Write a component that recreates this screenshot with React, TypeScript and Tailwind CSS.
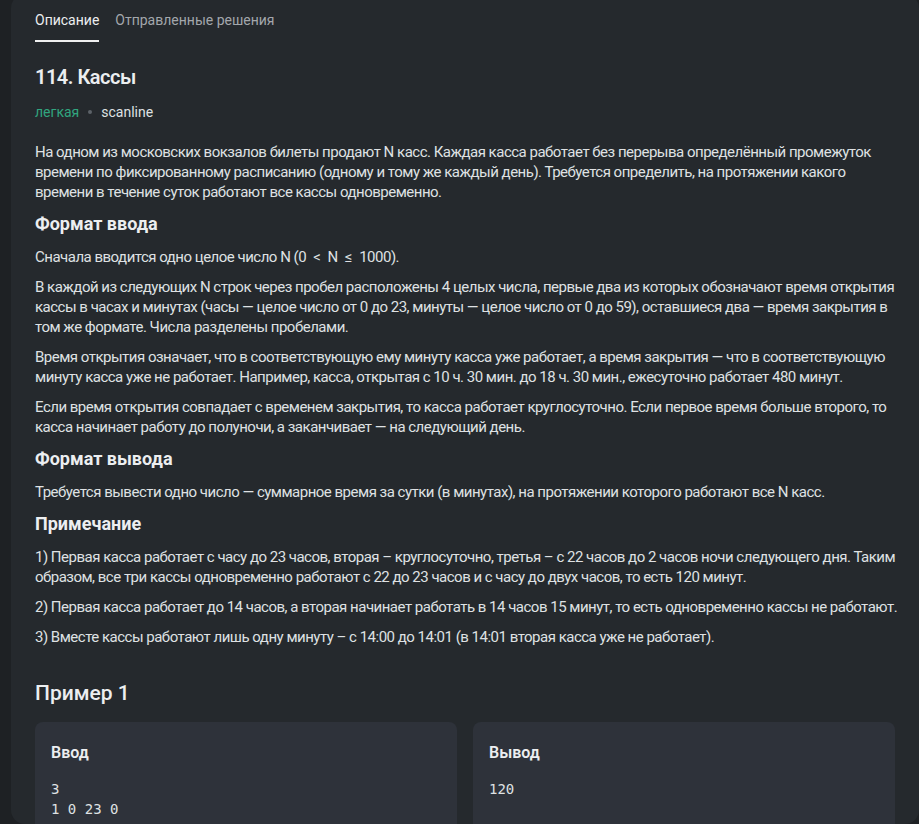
const font = { fontFamily: 'Roboto, "Noto Sans", sans-serif' };

function Para({ children }: { children: React.ReactNode }) {
  return (
    <p className="mb-[10px] whitespace-nowrap text-[15px] leading-5 tracking-[-0.5px] text-[#dfe1e3]">{children}</p>
  );
}

function Heading({ children }: { children: React.ReactNode }) {
  return <h3 className="mb-[11px] text-[18px] font-bold leading-6 text-[#eceef0]">{children}</h3>;
}

function SampleCard({ title, lines }: { title: string; lines: string[] }) {
  return (
    <div className="rounded-lg bg-[#2e323a] px-4 pb-5 pt-5">
      <div className="text-[16px] font-semibold leading-[22px] text-[#eceef0]">{title}</div>
      <pre
        className="mt-[15px] text-[14px] leading-5 text-[#dfe1e3]"
        style={{ fontFamily: '"DejaVu Sans Mono", monospace' }}
      >
        {lines.join("\n")}
      </pre>
    </div>
  );
}

export default function App() {
  return (
    <div className="h-[824px] overflow-hidden bg-[#1e2124]" style={font}>
      <div className="ml-[11px] -mt-[6px] h-[830px] overflow-hidden rounded-[14px] bg-[#25292d] px-6 pt-[6px]">
        <nav className="flex gap-4 pt-[10px] text-[14px] leading-5">
          <div className="border-b-2 border-[#f0f0f0] pb-[10px] text-[#eceef0]">Описание</div>
          <div className="pb-[10px] text-[#a3a7ac]">Отправленные решения</div>
        </nav>

        <h1 className="mt-[21px] text-[20px] font-semibold leading-7 tracking-[-0.5px] text-[#eceef0]">114. Кассы</h1>

        <div className="mt-[11px] flex items-center gap-[9px] text-[14px] leading-5">
          <span className="text-[#31a57f]">легкая</span>
          <span className="h-[4px] w-[4px] rounded-full bg-[#5d6268]" />
          <span className="text-[#dfe1e3]">scanline</span>
        </div>

        <div className="mt-[20px]">
          <Para>
            На одном из московских вокзалов билеты продают N касс. Каждая касса работает без перерыва определённый
            промежуток
            <br />
            времени по фиксированному расписанию (одному и тому же каждый день). Требуется определить, на протяжении
            какого
            <br />
            времени в течение суток работают все кассы одновременно.
          </Para>

          <Heading>Формат ввода</Heading>
          <Para>
            Сначала вводится одно целое число N (0&ensp;&lt;&ensp;N&ensp;≤&ensp;1000).
          </Para>
          <Para>
            В каждой из следующих N строк через пробел расположены 4 целых числа, первые два из которых обозначают
            время открытия
            <br />
            кассы в часах и минутах (часы — целое число от 0 до 23, минуты — целое число от 0 до 59), оставшиеся два —
            время закрытия в
            <br />
            том же формате. Числа разделены пробелами.
          </Para>
          <Para>
            Время открытия означает, что в соответствующую ему минуту касса уже работает, а время закрытия — что в
            соответствующую
            <br />
            минуту касса уже не работает. Например, касса, открытая с 10 ч. 30 мин. до 18 ч. 30 мин., ежесуточно
            работает 480 минут.
          </Para>
          <Para>
            Если время открытия совпадает с временем закрытия, то касса работает круглосуточно. Если первое время
            больше второго, то
            <br />
            касса начинает работу до полуночи, а заканчивает — на следующий день.
          </Para>

          <Heading>Формат вывода</Heading>
          <Para>
            Требуется вывести одно число — суммарное время за сутки (в минутах), на протяжении которого работают все N
            касс.
          </Para>

          <Heading>Примечание</Heading>
          <Para>
            1) Первая касса работает с часу до 23 часов, вторая – круглосуточно, третья – с 22 часов до 2 часов ночи
            следующего дня. Таким
            <br />
            образом, все три кассы одновременно работают с 22 до 23 часов и с часу до двух часов, то есть 120 минут.
          </Para>
          <Para>
            2) Первая касса работает до 14 часов, а вторая начинает работать в 14 часов 15 минут, то есть одновременно
            кассы не работают.
          </Para>
          <Para>3) Вместе кассы работают лишь одну минуту – с 14:00 до 14:01 (в 14:01 вторая касса уже не работает).</Para>
        </div>

        <h2 className="mt-[32px] text-[21px] font-medium leading-7 text-[#eceef0]">Пример 1</h2>

        <div className="mt-[15px] grid grid-cols-2 gap-4">
          <SampleCard title="Ввод" lines={["3", "1 0 23 0", "0 0 0 0", "22 0 2 0"]} />
          <SampleCard title="Вывод" lines={["120"]} />
        </div>
      </div>
    </div>
  );
}
